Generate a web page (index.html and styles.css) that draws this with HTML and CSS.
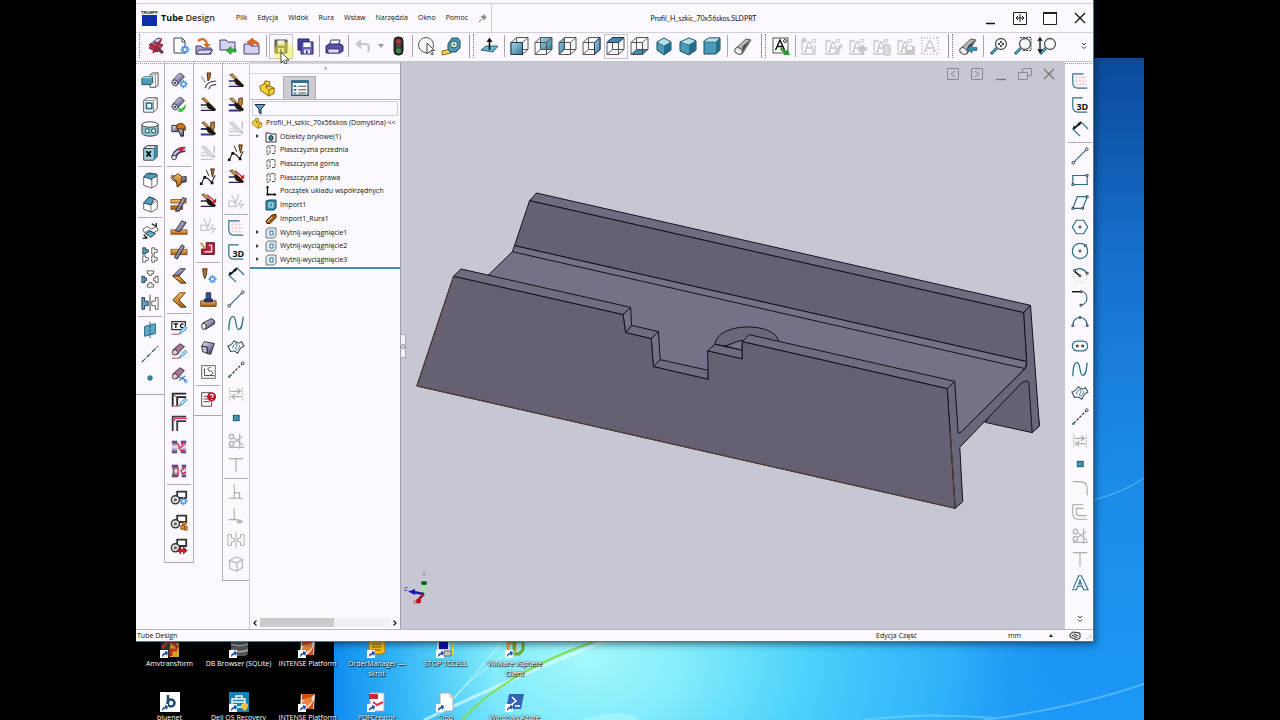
FILE: index.html
```html
<!DOCTYPE html>
<html lang="pl">
<head>
<meta charset="utf-8">
<title>Tube Design</title>
<link rel="stylesheet" href="styles.css">
</head>
<body>
<svg class="defs" aria-hidden="true">
  <defs>
    <linearGradient id="steel" x1="0" y1="0" x2="1" y2="1"><stop offset="0" stop-color="#a9d6e4"/><stop offset="1" stop-color="#2f7896"/></linearGradient>
    <linearGradient id="pipe" x1="0" y1="0" x2="1" y2="1"><stop offset="0" stop-color="#f4f4fa"/><stop offset=".5" stop-color="#9490b4"/><stop offset="1" stop-color="#2c2848"/></linearGradient>
    <linearGradient id="gold" x1="0" y1="0" x2="0" y2="1"><stop offset="0" stop-color="#f4b860"/><stop offset="1" stop-color="#a85c10"/></linearGradient>
    <linearGradient id="grayTube" x1="0" y1="0" x2="1" y2="1"><stop offset="0" stop-color="#fff"/><stop offset="1" stop-color="#555"/></linearGradient>
    <linearGradient id="weld" x1="0" y1="0" x2="0" y2="1"><stop offset="0" stop-color="#2f2b6a"/><stop offset=".5" stop-color="#ece6f4"/><stop offset="1" stop-color="#3c3070"/></linearGradient>
  </defs>
  <!-- shared parts -->
  <symbol id="wire" viewBox="0 0 20 20"><path d="M1 6.500h11.500v12H1zM6.500 1.500H18v12H6.500zM1 6.500l5.500-5M12.500 6.500l5.500-5M1 18.500l5.500-5M12.500 18.500l5.500-5" fill="none" stroke="#444" stroke-width=".9"/></symbol>
  <symbol id="tube" viewBox="0 0 20 20"><path d="M3 9L10 1.500c3 0 5 2 6 4L8 14z" fill="url(#pipe)" stroke="#2a2648" stroke-width=".8"/><ellipse cx="5.500" cy="12" rx="3.500" ry="3" transform="rotate(40 5.500 12)" fill="#d8d4e8" stroke="#2a2648"/><circle cx="5.500" cy="12" r="1.300" fill="#444"/></symbol>
  <symbol id="gear" viewBox="0 0 20 20"><path d="M15 9v9M10.500 13.500h9M12 10.500l6 6M18 10.500l-6 6" stroke="#4a94ea" stroke-width="1.800"/><circle cx="15" cy="13.500" r="1.500" fill="#fff"/></symbol>
  <symbol id="pen" viewBox="0 0 20 20"><path d="M3 3l3-1 6 6-2 2z" fill="#c89550" stroke="#5a3510" stroke-width=".8"/><path d="M9 7l4 2 6 6-2 2-7-3-2-4z" fill="#241608"/></symbol>
  <symbol id="letterA" viewBox="0 0 20 20"><path d="M2 5v13h13M2 5h5M15 18V9M5 15.500L8.500 6h1.500l3.500 9.500M6.500 12h5.500M4 15.500h3M11.500 15.500h3" fill="none" stroke="currentColor" stroke-width="1.300"/><circle cx="14" cy="5" r="1.800" fill="none" stroke="currentColor"/></symbol>
  <symbol id="lens" viewBox="0 0 20 20"><path d="M8 12l-6 6" stroke="#1d6684" stroke-width="3"/><path d="M8.500 11.500L3 17" stroke="#8cc5d8"/><circle cx="12" cy="8" r="5.500" fill="#f4f8fa" stroke="#555" stroke-width="1.300"/></symbol>

  <!-- standard bar -->
  <symbol id="app" viewBox="0 0 20 20"><path d="M3 9l9-7 4 1-9 10z" fill="#c8ccec" stroke="#40386a"/><path d="M3 12l6-6 8 3-6 7z" fill="#b4485c" stroke="#5a1020"/><path d="M4 8l12 9M7 17l8-13" stroke="#b01c34" stroke-width="2"/><path d="M12 10l6 6-2 2-6-6z" fill="#6a3a5c"/></symbol>
  <symbol id="new" viewBox="0 0 20 20"><path d="M4 2h8l3 3v12H4z" fill="#fff" stroke="#445"/><path d="M12 2v4h3" fill="none" stroke="#445"/><use href="#gear"/></symbol>
  <symbol id="open" viewBox="0 0 20 20"><path d="M2 10h5l2 2h8v6H2z" fill="#aaa6d4" stroke="#3c3870"/><path d="M5 14h14l-4 4H2z" fill="#dcdaf4" stroke="#3c3870"/><path d="M4 5c5-4 8-1 9 3" fill="none" stroke="#d86a20" stroke-width="2.400"/><path d="M9 8h8l-4 4z" fill="#d86a20"/></symbol>
  <symbol id="fetch" viewBox="0 0 20 20"><path d="M2 4h6l2 2h7v8H2z" fill="#d5d2ef" stroke="#45417c"/><path d="M8 14.500l5-4v2.500h5v3h-5v2.500z" fill="#32ae3c" stroke="#157a20" stroke-width=".6"/></symbol>
  <symbol id="send" viewBox="0 0 20 20"><path d="M2 8h5l2 2h8v8H2z" fill="#d5d2ef" stroke="#45417c"/><path d="M5 6l6-4v2.500c4 0 6 2 6 6-1-2-3-3-6-3V10z" fill="#e0691e" stroke="#9c3c08" stroke-width=".6"/></symbol>
  <symbol id="save" viewBox="0 0 20 20"><path d="M4 4h12v13H4z" fill="#77776a" stroke="#505044"/><path d="M6.500 4.500h7v5h-7z" fill="#f4f4ec"/><path d="M7 12h6v4.500H7z" fill="#e8e8d8"/><path d="M9 13h1.500v3H9z" fill="#55583c"/></symbol>
  <symbol id="saveall" viewBox="0 0 20 20"><path d="M3 3h11v11H3z" fill="#4b45a4" stroke="#25215e"/><path d="M6 6h12v12H6z" fill="#6560bc" stroke="#25215e"/><path d="M8.500 6.500h7V11h-7z" fill="#fff"/><path d="M9 13.500h6v4H9z" fill="#e4e4f8"/><path d="M11 14.500h1.500v3H11z" fill="#25215e"/></symbol>
  <symbol id="print" viewBox="0 0 20 20"><path d="M7 4h9l-2 6H5z" fill="#fff" stroke="#3b3878"/><path d="M2 10l3-2h12l2 2v5l-3 2H2z" fill="#5751a8" stroke="#2a2668"/><path d="M4 13h11v4H4z" fill="#dcdaf6" stroke="#2a2668" stroke-width=".7"/></symbol>
  <symbol id="undo" viewBox="0 0 20 20"><path d="M4 8h8c4 0 5 3 3 8" fill="none" stroke="#c8c8cc" stroke-width="2.200"/><path d="M2 8l6-5v10z" fill="#c8c8cc"/></symbol>
  <symbol id="light" viewBox="0 0 20 20"><rect x="6" y="1" width="9" height="18" rx="4" fill="#333" stroke="#111"/><circle cx="10.500" cy="5.500" r="2.500" fill="#b83838"/><circle cx="10.500" cy="10.200" r="1.600" fill="#554"/><circle cx="10.500" cy="14.700" r="2.500" fill="#389048"/></symbol>
  <symbol id="select" viewBox="0 0 20 20"><circle cx="9" cy="9" r="7.500" fill="none" stroke="#555"/><path d="M10 7v11l2.500-2.500L15 19l1.500-1-2.500-3.500h3.500z" fill="#fff" stroke="#444"/></symbol>
  <symbol id="tape" viewBox="0 0 20 20"><path d="M1 15l9-2v4l-9 2z" fill="#f0d050" stroke="#886a10"/><path d="M7 13V8l4-6h6l2 3v7l-4 4h-6z" fill="#4f9ab8" stroke="#194c64"/><circle cx="13" cy="8.500" r="3.500" fill="#f0ecc0" stroke="#194c64"/><circle cx="13" cy="8.500" r="1.200" fill="#3f8fae"/></symbol>
  <symbol id="normal" viewBox="0 0 20 20"><path d="M2 14l5-4h12l-5 6z" fill="#69b1ca" stroke="#256b86"/><path d="M10.500 14V4" stroke="#111" stroke-width="1.600"/><path d="M7.500 6l3-4.500 3 4.500z" fill="#111"/></symbol>
  <symbol id="c-front" viewBox="0 0 20 20"><use href="#wire"/><path d="M1 6.500h11.500v12H1z" fill="url(#steel)" stroke="#235"/></symbol>
  <symbol id="c-back" viewBox="0 0 20 20"><path d="M6.500 1.500H18v12H6.500z" fill="url(#steel)"/><use href="#wire"/></symbol>
  <symbol id="c-left" viewBox="0 0 20 20"><path d="M1 6.500l5.500-5v12l-5.500 5z" fill="url(#steel)"/><use href="#wire"/></symbol>
  <symbol id="c-right" viewBox="0 0 20 20"><use href="#wire"/><path d="M12.500 6.500l5.500-5v12l-5.500 5z" fill="url(#steel)" stroke="#235"/></symbol>
  <symbol id="c-top" viewBox="0 0 20 20"><use href="#wire"/><path d="M1 6.500l5.500-5H18l-5.500 5z" fill="#3f8aa8" stroke="#235"/></symbol>
  <symbol id="c-bottom" viewBox="0 0 20 20"><path d="M1 18.500l5.500-5H18l-5.500 5z" fill="#3f8aa8"/><use href="#wire"/></symbol>
  <symbol id="c-iso" viewBox="0 0 20 20"><path d="M10 2l7 4v8l-7 5-7-5V6z" fill="#4a9ab8" stroke="#164a60"/><path d="M10 2l7 4-7 4-7-4z" fill="#b5dfea" stroke="#164a60" stroke-width=".6"/><path d="M10 10l7-4v8l-7 5z" fill="#246e8c"/></symbol>
  <symbol id="c-tri" viewBox="0 0 20 20"><path d="M11 2l7 3v9l-7 5-9-4V6z" fill="#4a9ab8" stroke="#164a60"/><path d="M11 2l7 3-7 4-9-3z" fill="#b5dfea" stroke="#164a60" stroke-width=".6"/><path d="M11 9l7-4v9l-7 5z" fill="#246e8c"/></symbol>
  <symbol id="c-di" viewBox="0 0 20 20"><path d="M2 5l5-3h11v12l-4 4H2z" fill="#4a9ab8" stroke="#164a60"/><path d="M2 5l5-3h11l-4 4H2z" fill="#b5dfea" stroke="#164a60" stroke-width=".6"/><path d="M14 6l4-4v12l-4 4z" fill="#246e8c"/></symbol>
  <symbol id="roll" viewBox="0 0 20 20"><path d="M2 13L13 3l5 1-9 14z" fill="url(#grayTube)" stroke="#555"/><ellipse cx="5.500" cy="15" rx="4" ry="3" transform="rotate(35 5.500 15)" fill="#eee" stroke="#555"/><path d="M17 4l-8 12 1-6z" fill="#444"/></symbol>
  <symbol id="note" viewBox="0 0 20 20"><rect x="2" y="2" width="15" height="15" fill="#fff" stroke="#555"/><path d="M4.500 14L9 4l4.500 10M6 10.500h6" fill="none" stroke="#111" stroke-width="1.500"/><circle cx="14" cy="5" r="1.500" fill="none" stroke="#333"/><path d="M10 11l5 4 1-2 3 6h-7l1.500-1.500-4.500-4z" fill="#2f9a2a"/></symbol>
  <symbol id="a1" viewBox="0 0 20 20"><use href="#letterA"/><path d="M1 4h6M4 1v6M2 2l4 4M6 2L2 6" stroke="currentColor"/></symbol>
  <symbol id="a2" viewBox="0 0 20 20"><use href="#letterA"/><path d="M10 17l7-9 2 2-7 8z" fill="currentColor"/></symbol>
  <symbol id="a3" viewBox="0 0 20 20"><use href="#letterA"/><path d="M10 11h9v4h-9zM13 9h3v10h-3z" fill="currentColor"/></symbol>
  <symbol id="a4" viewBox="0 0 20 20"><use href="#letterA"/><rect x="12" y="9" width="6" height="10" rx="2" fill="#ddd" stroke="currentColor" stroke-width="1.500"/></symbol>
  <symbol id="a5" viewBox="0 0 20 20"><use href="#letterA"/><path d="M9 10h10v9H9z" fill="currentColor"/><path d="M11 10.500h5v3h-5z" fill="#fff"/></symbol>
  <symbol id="a6" viewBox="0 0 20 20"><path d="M5 15L9 5h1.500L15 15M6.500 12h6.500M4 15h3M12.500 15H16" fill="none" stroke="currentColor" stroke-width="1.300"/><path d="M2 1v18M18 1v18M1 2h18M1 18h18" stroke="currentColor" stroke-width="2" stroke-dasharray="1 2"/></symbol>
  <symbol id="rollb" viewBox="0 0 20 20"><use href="#roll"/><path d="M9 13l5-4v2.500h5v3h-5V17z" fill="#3b8db0" stroke="#17506a" stroke-width=".6"/></symbol>
  <symbol id="z1" viewBox="0 0 20 20"><use href="#lens"/><path d="M9 8h6M12 5v6" stroke="#111" stroke-width="1.400" stroke-dasharray="2 2"/></symbol>
  <symbol id="z2" viewBox="0 0 20 20"><path d="M7 1.500h11v13H9" fill="none" stroke="#333" stroke-dasharray="2 1"/><use href="#lens"/></symbol>
  <symbol id="z3" viewBox="0 0 20 20"><use href="#lens" x="1"/><path d="M3 3v12M1 5l2-3 2 3M1 13l2 3 2-3" fill="none" stroke="#111" stroke-width="1.300"/></symbol>

  <!-- features -->
  <symbol id="f1" viewBox="0 0 20 20"><path d="M10 3l3-2h6v14l-3 2h-6z" fill="#fff" stroke="#444"/><path d="M16 3v14M10 3h6l3-2" fill="none" stroke="#888"/><path d="M1 7l3-2h9v7l-2 2H1z" fill="#4c9dba" stroke="#174a5e"/><path d="M1 7l3-2h9l-2 2z" fill="#a5d5e4"/></symbol>
  <symbol id="f2" viewBox="0 0 20 20"><path d="M3 5l4-3h11v12l-4 4H3z" fill="#fff" stroke="#444"/><path d="M14 5v13M14 5l4-3M3 5h11" fill="none" stroke="#888"/><path d="M6 8h6v6H6z" fill="#fff" stroke="#2b7c98" stroke-width="2"/></symbol>
  <symbol id="f3" viewBox="0 0 20 20"><path d="M1 5v10c3 4 15 4 18 0V5z" fill="#8cc4d6" stroke="#333"/><ellipse cx="10" cy="5" rx="9" ry="3" fill="#fff" stroke="#333"/><path d="M5 10h4v4H5zM12 10h4v4h-4z" fill="#fff" stroke="#174a5e"/></symbol>
  <symbol id="f4" viewBox="0 0 20 20"><path d="M3 5l4-3h11v12l-4 4H3z" fill="#a9d5e3" stroke="#333"/><path d="M3 5l4-3h11l-4 3z" fill="#fff" stroke="#333"/><path d="M14 5l4-3v12l-4 4z" fill="#3c8aa6"/><path d="M6 8l5 6M11 8l-5 6" stroke="#111" stroke-width="2"/></symbol>
  <symbol id="f5" viewBox="0 0 20 20"><path d="M3 7l6-5 9 2v11l-6 4-9-3z" fill="#fff" stroke="#555"/><path d="M3 7l3-4h10c2 1 2 3 0 4-3 0-4 1-4 3-3-2-6-3-9-3z" fill="#4d9fbb" stroke="#235"/><path d="M12 9v10" stroke="#666"/></symbol>
  <symbol id="f6" viewBox="0 0 20 20"><path d="M3 9l6-7 9 4v9l-6 4-9-3z" fill="#fff" stroke="#555"/><path d="M3 9l6-7 6 2-4 7z" fill="#4d9fbb" stroke="#235"/><path d="M11 11l7-5M11 11v8" stroke="#666"/></symbol>
  <symbol id="f7" viewBox="0 0 20 20"><path d="M2 8l5-3 5 3 5-3 2 4-5 3-5-3-5 3z" fill="#fff" stroke="#555"/><path d="M5 13l5-3 6 3-5 4z" fill="#63b0c9" stroke="#235"/><path d="M12 2l5 3M17 5V1M3 14l4 4M7 18H2" stroke="#111" stroke-width="1.400"/></symbol>
  <symbol id="f8" viewBox="0 0 20 20"><path d="M2 2h3v2h3v3H5v2H2z" fill="#57a7c2" stroke="#235"/><path d="M12 2h3v2h3v3h-3v2h-3zM2 11h3v2h3v3H5v2H2zM12 11h3v2h3v3h-3v2h-3z" fill="#fff" stroke="#555"/></symbol>
  <symbol id="f9" viewBox="0 0 20 20"><path d="M1 7h3v2h2v3H4v2H1z" fill="#57a7c2" stroke="#235"/><path d="M7 1h7v3h-2v2H9V4H7zM19 7h-3v2h-2v3h2v2h3zM7 19h7v-3h-2v-2H9v2H7z" fill="#fff" stroke="#555"/></symbol>
  <symbol id="f10" viewBox="0 0 20 20"><path d="M1 4h3v4h4v5H4v4H1z" fill="#57a7c2" stroke="#235"/><path d="M19 4h-3v4h-4v5h4v4h3z" fill="#fff" stroke="#555"/><path d="M10 1v18" stroke="#333"/></symbol>
  <symbol id="f11" viewBox="0 0 20 20"><path d="M4 6l12-3v11L4 17z" fill="#5caac5" stroke="#1d607b"/><path d="M10 1v18" stroke="#174a5e" stroke-dasharray="3 1"/></symbol>
  <symbol id="axis" viewBox="0 0 20 20"><path d="M1 19L19 1" stroke="#23505e" stroke-width="1.300" stroke-dasharray="5 1 1 1"/></symbol>
  <symbol id="dot" viewBox="0 0 20 20"><circle cx="10" cy="10" r="2.500" fill="#3e93ae" stroke="#1d5a70"/></symbol>

  <!-- tube bar -->
  <symbol id="t1" viewBox="0 0 20 20"><use href="#tube"/><use href="#gear"/></symbol>
  <symbol id="t2" viewBox="0 0 20 20"><use href="#tube"/><path d="M8 17l3-4 1.500 1.500L18 9l-1 5-4 4z" fill="#3fc03c"/></symbol>
  <symbol id="t3" viewBox="0 0 20 20"><path d="M2 6h10v7H2z" fill="url(#pipe)" stroke="#222"/><path d="M8 5c5-3 10 0 9 6l-5 1-5-3z" fill="#d07418" stroke="#4a2404"/><path d="M9 10h6v8h-3z" fill="url(#pipe)" stroke="#222"/></symbol>
  <symbol id="t4" viewBox="0 0 20 20"><path d="M4 15c2-6 6-9 13-9" fill="none" stroke="#3a3660" stroke-width="6"/><path d="M4 14c2-5 6-8 13-8" fill="none" stroke="#c8c4dc" stroke-width="2.500"/><path d="M10 7c2-1 4-2 5-2" stroke="#d82030" stroke-width="4" fill="none"/><circle cx="4.500" cy="15" r="2.500" fill="#eee" stroke="#222"/></symbol>
  <symbol id="t5" viewBox="0 0 20 20"><path d="M2 5l9 2 7-1v6l-9 2-7-5z" fill="url(#pipe)" stroke="#333"/><path d="M3 7l6-4 4 3-1 9-4 3-1-7z" fill="url(#gold)" stroke="#5c2f06"/></symbol>
  <symbol id="t6" viewBox="0 0 20 20"><path d="M1 5h17v4H1zM1 12h13v4H1z" fill="url(#gold)" stroke="#5c2f06" stroke-width=".7"/><path d="M6 18L14 3l4 1-8 14z" fill="url(#pipe)" stroke="#222"/></symbol>
  <symbol id="t7" viewBox="0 0 20 20"><path d="M1 12h18v5H1z" fill="url(#gold)" stroke="#5c2f06" stroke-width=".7"/><path d="M6 13L13 2l5 2-7 10z" fill="url(#pipe)" stroke="#222"/></symbol>
  <symbol id="t8" viewBox="0 0 20 20"><path d="M1 7h18v6H1z" fill="url(#gold)" stroke="#5c2f06" stroke-width=".7"/><path d="M5 16L13 2l3 2-8 14z" fill="url(#pipe)" stroke="#222"/></symbol>
  <symbol id="t9" viewBox="0 0 20 20"><path d="M3 10l8-8h6l-7 8z" fill="url(#pipe)" stroke="#222"/><path d="M3 10h7l8 8h-6z" fill="url(#gold)" stroke="#5c2f06"/></symbol>
  <symbol id="t10" viewBox="0 0 20 20"><path d="M3 10l8-8h6l-7 8 8 8h-6z" fill="url(#gold)" stroke="#5c2f06"/></symbol>
  <symbol id="edit" viewBox="0 0 20 20"><path d="M2 18h8" stroke="#d86a80" stroke-width="1.400"/><path d="M10 18l2-4 5-5 2 2-5 5z" fill="#b8e0f4" stroke="#3888c0"/></symbol>
  <symbol id="t11" viewBox="0 0 20 20"><path d="M2 4h15v9H2z" fill="#fff" stroke="#333" stroke-width="1.400"/><path d="M4 6.500h5M6.500 6.500V11M15 7c-4-2-5 5 0 3.500" fill="none" stroke="#111" stroke-width="1.500"/><use href="#edit"/></symbol>
  <symbol id="t12" viewBox="0 0 20 20"><path d="M3 9l8-7 5 3-8 9z" fill="#a07890" stroke="#40283a"/><circle cx="5.500" cy="11.500" r="3" fill="#e8c8d0" stroke="#40283a"/><use href="#edit"/></symbol>
  <symbol id="t13" viewBox="0 0 20 20"><path d="M3 9l8-7 5 3-8 9z" fill="#a07890" stroke="#40283a"/><circle cx="5.500" cy="11.500" r="3" fill="#e8c8d0" stroke="#40283a"/><path d="M10 12l8 4M10 16l7-5" stroke="#2878d8" stroke-width="1.300"/><circle cx="17.500" cy="17" r="1.500" fill="none" stroke="#2878d8"/></symbol>
  <symbol id="t14" viewBox="0 0 20 20"><path d="M18 4H3v15M18 8H8v10" fill="none" stroke="#222" stroke-width="2"/><path d="M3 4l5 5" stroke="#d82030"/><use href="#edit"/></symbol>
  <symbol id="t15" viewBox="0 0 20 20"><path d="M18 3H3v16M18 8H8v11" fill="none" stroke="#3b3540" stroke-width="2"/><path d="M5 8V5h14" fill="none" stroke="#d83848" stroke-width="1.200"/></symbol>
  <symbol id="t16" viewBox="0 0 20 20"><path d="M2 3h6v14H2zM12 3h6v14h-6zM8 8h4v4H8z" fill="url(#weld)"/><path d="M4 6h4c3 0 1 8 4 8h4M14 4v5l-3 2" fill="none" stroke="#d82848" stroke-width="1.300"/></symbol>
  <symbol id="t17" viewBox="0 0 20 20"><path d="M2 3h7v14H2zM13 3h5v14h-5z" fill="url(#weld)"/><path d="M4 6h5v9H4zM17 5l-5 5 2 3 4-2" fill="none" stroke="#d82848" stroke-width="1.400"/></symbol>
  <symbol id="machine" viewBox="0 0 20 20"><path d="M8 3h10v7H8z" fill="#fff" stroke="#333" stroke-width="2"/><circle cx="6" cy="12" r="4.500" fill="#e4e4ea" stroke="#333" stroke-width="1.600"/><circle cx="6" cy="12" r="1.800" fill="#666"/></symbol>
  <symbol id="t18" viewBox="0 0 20 20"><use href="#machine"/><use href="#gear"/></symbol>
  <symbol id="t19" viewBox="0 0 20 20"><use href="#machine"/><path d="M14 10h4v3h-4zM12 14h4v4h-4zM16 15h3v4h-3z" fill="#f09a28" stroke="#884808"/></symbol>
  <symbol id="t20" viewBox="0 0 20 20"><use href="#machine"/><path d="M8 15l4-4v2.500h3V11l4 4-4 4v-2.500h-3V19z" fill="#c01828" stroke="#600810" stroke-width=".6"/></symbol>

  <!-- sketch-cut bar -->
  <symbol id="s1" viewBox="0 0 20 20"><path d="M9 1h4l-1 6-2 3z" fill="#b87830" stroke="#3a2008"/><path d="M3 6l4 5M7 18c1-6 5-8 12-8M11 19c1-4 3-5 8-5" fill="none" stroke="#444" stroke-width="1.300"/><path d="M3 4l3 6" stroke="#ccc" stroke-width="2"/></symbol>
  <symbol id="s2" viewBox="0 0 20 20"><path d="M2 10h8M2 16h16" stroke="#23245c" stroke-width="1.600"/><path d="M2 13h9" stroke="#b8b8d0"/><use href="#pen"/></symbol>
  <symbol id="s3" viewBox="0 0 20 20"><path d="M2 10h8M2 16h14" stroke="#2b3580" stroke-width="2.200"/><path d="M13 11V3l4-1v6l-2 5z" fill="#c58b3a" stroke="#4a2c0c"/><use href="#pen"/></symbol>
  <symbol id="s4" viewBox="0 0 20 20"><path d="M2 10h6M2 13h8M2 17h14" stroke="#c8c8cc" stroke-width="1.300"/><path d="M3 3l3-1 6 6 6 7-7-2-3-4z" fill="#dcdce0" stroke="#bcbcc0"/><path d="M17 2v8M17 12v2" stroke="#bcbcc0" stroke-width="1.500"/></symbol>
  <symbol id="s5" viewBox="0 0 20 20"><path d="M3 17l3-7 4 2 4 4 4-8" fill="none" stroke="#222" stroke-width="1.200"/><path d="M1 16h3v3H1zM5 9h3v3H5zM13 15h3v3h-3z" fill="#111"/><path d="M8 2l3 7M13 1h4l-2 9z" fill="#c07a30" stroke="#3a2008"/></symbol>
  <symbol id="s6" viewBox="0 0 20 20"><path d="M2 10h8M2 16h14" stroke="#23245c" stroke-width="1.600"/><use href="#pen"/><path d="M9 3l8 7" stroke="#d01828" stroke-width="1.300"/><path d="M19 7v5h-5z" fill="#d01828"/></symbol>
  <symbol id="s7" viewBox="0 0 20 20"><path d="M2 10h5l4 6H2zM5 3l5 9M13 2l-3 10M16 9l-3 5h5l-4 5" fill="none" stroke="#c4c4c8" stroke-width="1.300"/></symbol>
  <symbol id="s8" viewBox="0 0 20 20"><path d="M8 3h9v13H3v-6h5z" fill="#c32040" stroke="#400818"/><path d="M11 6h3v7H6" fill="none" stroke="#f8d8e0" stroke-width="1.500"/><path d="M2 3l5 7" stroke="#c58b3a" stroke-width="2"/></symbol>
  <symbol id="s9" viewBox="0 0 20 20"><path d="M4 2h5l-1 7-1.500 4L5 9z" fill="#b87830" stroke="#3a2008"/><use href="#gear"/></symbol>
  <symbol id="s10" viewBox="0 0 20 20"><path d="M2 11h17v6H2z" fill="url(#gold)" stroke="#5c2f06"/><path d="M8 2h5v9H8zM6 9h9v3H6z" fill="#41578c" stroke="#161e48"/></symbol>
  <symbol id="s11" viewBox="0 0 20 20"><path d="M4 9l10-5c3 1 4 3 3 6L7 16z" fill="url(#pipe)" stroke="#222"/><ellipse cx="5.500" cy="12.500" rx="2.500" ry="3.500" fill="#eee" stroke="#222"/></symbol>
  <symbol id="s12" viewBox="0 0 20 20"><path d="M6 3l11 2-4 12-4-1V9L3 8z" fill="url(#pipe)" stroke="#222"/><path d="M3 8l6 1v7l-5-2z" fill="#c4c0dc" stroke="#222"/></symbol>
  <symbol id="s13" viewBox="0 0 20 20"><rect x="3" y="3" width="15" height="14" fill="#fff" stroke="#555"/><path d="M6 6v8h11M13 5c-5 0-3 5 0 4 3 0 3 4 0 4" fill="none" stroke="#333"/></symbol>
  <symbol id="s14" viewBox="0 0 20 20"><path d="M3 3h11v15H3z" fill="#fff" stroke="#4a3440"/><path d="M5 7h5M5 10h5M5 13h7" stroke="#4a3440"/><circle cx="14" cy="7.500" r="5" fill="#b81828"/><path d="M12.500 6c1-2 4-1 3 1l-1.500 1.500M14 10v1" fill="none" stroke="#fff" stroke-width="1.300"/></symbol>

  <!-- sketch bar -->
  <symbol id="k1" viewBox="0 0 20 20"><path d="M6 3v12M10 3v14M14 3v14M4 6h14M4 10h14M5 14h13" stroke="#f0c8cc" stroke-width=".8"/><path d="M14 2H2v10c0 4 2 6 6 6h10" fill="none" stroke="#286f8a" stroke-width="1.300"/></symbol>
  <symbol id="k2" viewBox="0 0 20 20"><path d="M13 2H2v10c0 4 2 6 6 6h10" fill="none" stroke="#286f8a" stroke-width="1.300"/><text x="6" y="15" class="t3d">3D</text></symbol>
  <symbol id="k3" viewBox="0 0 20 20"><path d="M10 18l-8-8 9-8 8 8" fill="none" stroke="#286f8a" stroke-width="1.300"/><path d="M3 10l8-7" stroke="#111" stroke-width="1.800"/><path d="M2 10l1-4 3 3zM11 2.500l-1 4-3-3z" fill="#111"/></symbol>
  <symbol id="line" viewBox="0 0 20 20"><path d="M3 17L17 3" stroke="#286f8a" stroke-width="1.300"/><circle cx="2.500" cy="17.500" r="1.500" fill="#fff" stroke="#333"/><circle cx="17.500" cy="2.500" r="1.500" fill="#fff" stroke="#333"/></symbol>
  <symbol id="spline" viewBox="0 0 20 20"><path d="M2 18C2 8 4 2 7 3c4 1 2 14 6 14 4 0 4-7 5-14" fill="none" stroke="#286f8a" stroke-width="1.400"/></symbol>
  <symbol id="surf" viewBox="0 0 20 20"><path d="M1 9c3 0 5-3 7-6l3 2c2 1 4 0 5-1l3 5c-3 1-5 3-7 8l-3-2c-2-1-3-1-5 0z" fill="none" stroke="#3b5158" stroke-width="1.200"/><path d="M6 11c1-4 4-6 5-4s-3 5-1 6 4-3 4-5" fill="none" stroke="#286f8a"/></symbol>
  <symbol id="cline" viewBox="0 0 20 20"><path d="M3 17L17 3" stroke="#222" stroke-width="1.300" stroke-dasharray="3 1.500"/><circle cx="2.500" cy="17.500" r="1.500" fill="#486"/><circle cx="17.500" cy="2.500" r="1.500" fill="#fff" stroke="#333"/></symbol>
  <symbol id="g-conv" viewBox="0 0 20 20"><path d="M3 3v14M17 3v14" stroke="#aaa" stroke-dasharray="2 1"/><path d="M4 7h10M11 4l4 3-4 3M16 13H7M9 10l-4 3 4 3" fill="none" stroke="#aaa" stroke-width="1.300"/></symbol>
  <symbol id="pt" viewBox="0 0 20 20"><rect x="7" y="7" width="6.500" height="6" fill="#3e93ae" stroke="#174a5e"/></symbol>
  <symbol id="g-trim" viewBox="0 0 20 20"><circle cx="5" cy="5" r="2.500" fill="none" stroke="#b4b4b8" stroke-width="1.500"/><circle cx="5" cy="13" r="2.500" fill="none" stroke="#b4b4b8" stroke-width="1.500"/><path d="M7 6l11 9M7 12l10-7M14 2v17M2 17h17" stroke="#b4b4b8" stroke-width="1.300"/></symbol>
  <symbol id="g-t" viewBox="0 0 20 20"><path d="M2 3h16" stroke="#aaa" stroke-width="1.400"/><path d="M10 3v15" stroke="#aaa" stroke-width="1.200"/></symbol>
  <symbol id="g-perp" viewBox="0 0 20 20"><path d="M2 17h16M8 2v15M8 11h6v6" fill="none" stroke="#aaa" stroke-width="1.200"/></symbol>
  <symbol id="g-vis" viewBox="0 0 20 20"><path d="M2 14h10M8 2v12" fill="none" stroke="#aaa" stroke-width="1.200"/><path d="M10 16c2-3 6-3 8 0-2 3-6 3-8 0z" fill="#bbb"/></symbol>
  <symbol id="g-mir" viewBox="0 0 20 20"><path d="M1 4h4v4h3v4H5v4H1zM19 4h-4v4h-3v4h3v4h4zM10 1v18" fill="none" stroke="#aaa"/></symbol>
  <symbol id="g-cube" viewBox="0 0 20 20"><path d="M3 6l7-4 7 3v9l-6 4-8-3zM3 6l8 3 6-4M11 9v9" fill="none" stroke="#b4b4b8" stroke-width="1.300"/></symbol>
  <symbol id="rect" viewBox="0 0 20 20"><path d="M2 5h16v10H2z" fill="none" stroke="#286f8a" stroke-width="1.300"/><path d="M1 14h2v2H1zM17 4h2v2h-2z" fill="#fff" stroke="#333"/></symbol>
  <symbol id="para" viewBox="0 0 20 20"><path d="M7 3h11l-5 13H2z" fill="none" stroke="#286f8a" stroke-width="1.300"/><path d="M1 15h2v2H1zM12 15h2v2h-2zM17 2h2v2h-2z" fill="#fff" stroke="#333"/></symbol>
  <symbol id="hex" viewBox="0 0 20 20"><path d="M6 2.500h8l4.500 7.500-4.500 7.500H6L1.500 10z" fill="none" stroke="#286f8a" stroke-width="1.300"/><path d="M9 9h2v2H9z" fill="none" stroke="#333"/></symbol>
  <symbol id="circ" viewBox="0 0 20 20"><circle cx="10" cy="10" r="8.500" fill="none" stroke="#286f8a" stroke-width="1.300"/><path d="M9 9h2v2H9zM15 3h2v2h-2z" fill="#fff" stroke="#333"/></symbol>
  <symbol id="arc" viewBox="0 0 20 20"><circle cx="10" cy="11" r="7.500" fill="none" stroke="#d8a8a8" stroke-dasharray="1.500 2"/><path d="M4 5c5-4 11-2 14 4" fill="none" stroke="#286f8a" stroke-width="1.300"/><path d="M4 6l6 5" stroke="#111" stroke-width="1.600"/><path d="M3 4h2v2H3zM9 10h2v2H9zM17 7h2v2h-2z" fill="#fff" stroke="#333"/></symbol>
  <symbol id="tarc" viewBox="0 0 20 20"><path d="M1 3h10" stroke="#111" stroke-width="1.600"/><path d="M11 3c9 0 9 14 0 15" fill="none" stroke="#286f8a" stroke-width="1.300"/><path d="M10 2h2v2h-2zM10 17h2v2h-2z" fill="#fff" stroke="#333"/></symbol>
  <symbol id="arc3" viewBox="0 0 20 20"><path d="M2 14C2 2 18 2 18 14" fill="none" stroke="#286f8a" stroke-width="1.300"/><path d="M1 13h2v2H1zM9 4h2v2H9zM17 13h2v2h-2z" fill="#fff" stroke="#333"/></symbol>
  <symbol id="slot" viewBox="0 0 20 20"><rect x="1.500" y="4.500" width="17" height="11" rx="5.500" fill="none" stroke="#286f8a" stroke-width="1.300"/><path d="M6 9h2v2H6zM12 9h2v2h-2z" fill="#999" stroke="#333"/></symbol>
  <symbol id="g-fil" viewBox="0 0 20 20"><path d="M2 3h8c5 0 8 3 8 8v7" fill="none" stroke="#aaa" stroke-width="1.300"/></symbol>
  <symbol id="g-off" viewBox="0 0 20 20"><path d="M14 2H2v10c0 4 2 6 6 6h10M14 6H6v5c0 2 1 3 3 3h8" fill="none" stroke="#aaa" stroke-width="1.200"/></symbol>
  <symbol id="txt" viewBox="0 0 20 20"><path d="M1 17.500h5l1.500-4h5l1.500 4h5L11.500 2h-3L2.500 16M8.500 11h3L10 6.500z" fill="none" stroke="#286f8a" stroke-width="1.200"/></symbol>
  <symbol id="chev" viewBox="0 0 10 10"><path d="M3 2l2 2 2-2M3 5.500l2 2 2-2" fill="none" stroke="#333"/></symbol>

  <!-- tree -->
  <symbol id="part" viewBox="0 0 20 20"><path d="M2 8l5-3 1-3 5 1v5l5 2v6l-6 3-9-6z" fill="#f2cf3c" stroke="#7a5c08"/><path d="M8 9l5-2M12 19v-7l6-2M7 5l3 2v4" fill="none" stroke="#7a5c08"/></symbol>
  <symbol id="props" viewBox="0 0 20 20"><path d="M1 2h18v16H1z" fill="#fff" stroke="#2a5a70" stroke-width="1.500"/><path d="M1 3h18" stroke="#2a7090" stroke-width="3"/><path d="M3 7h3v2H3zM3 11h3v2H3zM3 15h3v1.500H3z" fill="#2a7090"/><path d="M8 8h9M8 12h9M8 15.500h9" stroke="#333"/></symbol>
  <symbol id="funnel" viewBox="0 0 12 12"><path d="M1 1.500h10L7 6v5l-2-1.500V6z" fill="#5aa6c0" stroke="#224"/></symbol>
  <symbol id="r-body" viewBox="0 0 12 12"><path d="M1 2h4l1 1h5v8H1z" fill="#fff" stroke="#333"/><path d="M4 5.500l2-1 2 1v3l-2 1-2-1z" fill="#3a88a8" stroke="#134"/></symbol>
  <symbol id="r-plane" viewBox="0 0 12 12"><path d="M2 2.500l3-1v8l-3 1zM6 1.500h4v8H7" fill="none" stroke="#555" stroke-dasharray="3 1"/></symbol>
  <symbol id="r-orig" viewBox="0 0 12 12"><path d="M2.500 1v8.500H11" fill="none" stroke="#111" stroke-width="1.300"/><path d="M1 3l1.500-2.500L4 3zM9 8l2.500 1.500L9 11zM1.500 8.500h2v2h-2z" fill="#111"/></symbol>
  <symbol id="r-imp" viewBox="0 0 12 12"><path d="M1 2l3-1h7v8l-2 2H1z" fill="#3b8fae" stroke="#134a60"/><path d="M4 4h4v4H4z" fill="none" stroke="#cfeaf2"/></symbol>
  <symbol id="r-tube" viewBox="0 0 12 12"><path d="M1 8l6-6 4-.5v3L5 10.500H2z" fill="#a8611c" stroke="#3c1c04"/><path d="M2 9l5-5" stroke="#f4d0a0"/></symbol>
  <symbol id="r-cut" viewBox="0 0 12 12"><path d="M1 3l2-2h8v8l-2 2H1z" fill="#dcebf2" stroke="#777"/><path d="M5 4h3v4H5z" fill="#fff" stroke="#2f7896"/></symbol>
  <symbol id="lnk" viewBox="0 0 20 20"><path d="M0 12h8v8H0z" fill="#fff"/><path d="M2 19c0-3 1-4 3-4v-2l3 1-1 4-1-1.500c-2 0-2 1-4 2.500z" fill="#1c50b0"/></symbol>
</svg>

<div class="desktop">
  <svg class="wallpaper" viewBox="0 0 810 662" preserveAspectRatio="none" aria-hidden="true">
    <defs>
      <linearGradient id="sky" x1="0" y1="0" x2="0" y2="1"><stop offset="0" stop-color="#0b4a9a"/><stop offset=".3" stop-color="#1770cc"/><stop offset=".6" stop-color="#1b8ae6"/><stop offset="1" stop-color="#1c98f6"/></linearGradient>
      <radialGradient id="glow" gradientUnits="userSpaceOnUse" cx="0" cy="0" r="1" gradientTransform="translate(255 600) scale(480 330)"><stop offset="0" stop-color="#a4f8fa"/><stop offset=".2" stop-color="#84ecfb"/><stop offset=".45" stop-color="#4dd2fa"/><stop offset=".75" stop-color="#35b8fa" stop-opacity=".8"/><stop offset="1" stop-color="#1c98f4" stop-opacity="0"/></radialGradient>
      <linearGradient id="edge" x1="0" y1="0" x2="1" y2="0"><stop offset="0" stop-color="#108cf0"/><stop offset=".2" stop-color="#30b8f8" stop-opacity="0"/></linearGradient>
    </defs>
    <rect width="810" height="662" fill="url(#sky)"/>
    <rect width="810" height="662" fill="url(#glow)"/>
    <rect width="810" height="662" fill="url(#edge)"/>
    <path d="M90 662Q200 610 290 576" fill="none" stroke="#e8ffff" stroke-width="3" opacity=".6"/>
    <path d="M112 650L168 584M112 650Q130 622 190 584" fill="none" stroke="#e8ffff" opacity=".7"/>
    <path d="M128 662Q170 614 270 580" fill="none" stroke="#86dc50" stroke-width="2"/>
    <path d="M760 442Q790 434 810 420" fill="none" stroke="#6cc4f8" opacity=".8"/>
    <path d="M248 662Q290 648 306 662z" fill="#c8ffff" opacity=".4"/>
    <path d="M530 662Q590 654 660 660M650 662Q740 650 810 626" fill="none" stroke="#9ce4ff" stroke-width="2" opacity=".4"/>
  </svg>

  <ul class="shortcuts">
    <li><a href="#"><svg viewBox="0 0 20 20"><path d="M1 3h18v16H1z" fill="#333"/><path d="M10 5h9v14h-9z" fill="#d8a428"/><path d="M2 10L10 2l8 8M11 18v-6h6" fill="none" stroke="#c03020" stroke-width="3"/><use href="#lnk"/></svg><span>Amvtransform</span></a></li>
    <li><a href="#"><svg viewBox="0 0 20 20"><rect x="2" y="1" width="17" height="17" rx="4" fill="#555"/><path d="M2 6c5 2 12 2 17 0M2 12c5 2 12 2 17 0" fill="none" stroke="#aaa" stroke-width="1.500"/><use href="#lnk"/></svg><span>DB Browser (SQLite)</span></a></li>
    <li><a href="#"><svg viewBox="0 0 20 20"><path d="M3 2h14l-1 15H2z" fill="#f4e8dc"/><path d="M4 2h13l-4 4-9 2zM16 7l-1 10H8c4-2 6-5 8-10z" fill="#cf4e14"/><ellipse cx="9" cy="10" rx="6" ry="3.500" fill="#e8843c" transform="rotate(-35 9 10)"/><use href="#lnk"/></svg><span>INTENSE Platform</span></a></li>
    <li><a href="#"><svg viewBox="0 0 20 20"><path d="M2 2h16v12l-3 2H2z" fill="#f7bd18" stroke="#b87e08"/><path d="M5 6h9M5 9h9M5 12h9" stroke="#8c5c04"/><use href="#lnk"/></svg><span>OrderManager — skrót</span></a></li>
    <li><a href="#"><svg viewBox="0 0 20 20"><path d="M1 2h13v11H1z" fill="#ddd"/><path d="M3 4h9v7H3z" fill="#0c0cb0"/><path d="M8 13h7v5H8z" fill="#c8c8c8" stroke="#666"/><path d="M17 3v14" stroke="#e8d820" stroke-width="2"/><use href="#lnk"/></svg><span>STOP TCCELL</span></a></li>
    <li><a href="#"><svg viewBox="0 0 20 20"><path d="M3 12V5h7v9" fill="none" stroke="#e89a28" stroke-width="3"/><path d="M9 12V3h9v9l-4 4H9" fill="none" stroke="#6aa82c" stroke-width="3"/><use href="#lnk"/></svg><span>VMware vSphere<br>Client</span></a></li>
    <li><a href="#"><svg viewBox="0 0 20 20"><path d="M0 0h20v20H0z" fill="#fff"/><path d="M8 3v10" stroke="#1f4a78" stroke-width="2.500"/><circle cx="11" cy="11" r="3.500" fill="none" stroke="#1f4a78" stroke-width="2.500"/><use href="#lnk"/></svg><span>bluenet</span></a></li>
    <li><a href="#"><svg viewBox="0 0 20 20"><path d="M0 0h20v20H0z" fill="#1683ae"/><path d="M3 7h13v8H3zM7 7V4h6v3M3 10h13" fill="none" stroke="#fff" stroke-width="1.300"/><path d="M12 12l4-1 3 1c0 4-1 5-3 7-3-2-4-3-4-7z" fill="#f0c040"/><use href="#lnk"/></svg><span>Dell OS Recovery</span></a></li>
    <li><a href="#"><svg viewBox="0 0 20 20"><path d="M3 2h14l-1 15H2z" fill="#f4e8dc"/><path d="M4 2h13l-4 4-9 2zM16 7l-1 10H8c4-2 6-5 8-10z" fill="#cf4e14"/><ellipse cx="9" cy="10" rx="6" ry="3.500" fill="#e8843c" transform="rotate(-35 9 10)"/><use href="#lnk"/></svg><span>INTENSE Platform</span></a></li>
    <li><a href="#"><svg viewBox="0 0 20 20"><path d="M3 1h14v18H3z" fill="#fff" stroke="#aaa"/><path d="M2 2h9v5H2z" fill="#c8283c"/><path d="M6 10l4 3 6-3" fill="none" stroke="#e03050" stroke-width="2"/><use href="#lnk"/></svg><span>PDFCreator</span></a></li>
    <li><a href="#"><svg viewBox="0 0 20 20"><path d="M4 1h10l3 3v15H4z" fill="#fff" stroke="#aaa"/><path d="M14 1v4h3" fill="none" stroke="#aaa"/><use href="#lnk"/></svg><span>Stop</span></a></li>
    <li><a href="#"><svg viewBox="0 0 20 20"><path d="M4 2h15l-3 15H1z" fill="#3464b8"/><path d="M7 5l4 4-5 4M10 14h5" fill="none" stroke="#fff" stroke-width="1.600"/><use href="#lnk"/></svg><span>Windows Azure</span></a></li>
  </ul>

  <div class="window">
    <div class="strip"></div>
    <header class="titlebar">
      <div class="brand"><svg viewBox="0 0 16 16" aria-label="TRUMPF"><text x="0" y="4" class="logo-text">TRUMPF</text><path d="M1 5h15v11H1z" fill="#0c2fa8"/></svg><span><b>Tube</b> Design</span></div>
      <nav class="menu">
        <button>Plik</button><button>Edycja</button><button>Widok</button><button>Rura</button><button>Wstaw</button><button>Narzędzia</button><button>Okno</button><button>Pomoc</button>
        <button class="pin" aria-label="Przypnij"><svg viewBox="0 0 10 10"><path d="M5.500 1L9 4.500 7.500 5 6.500 7.500 2.500 3.500 5 2.500z" fill="#888"/><path d="M4 6L1 9" stroke="#777"/></svg></button>
      </nav>
      <h1>Profil_H_szkic_70x56skos.SLDPRT</h1>
      <div class="winctl">
        <button aria-label="Minimalizuj"><svg viewBox="0 0 14 14"><path d="M3 12.500h9" stroke="#111" stroke-width="1.500"/></svg></button>
        <button aria-label="Rozciągnij"><svg viewBox="0 0 14 14"><path d="M.5 1.500h13v12H.5zM7 3v8M3 7h8M5 5L3 7l2 2M9 5l2 2-2 2" fill="none" stroke="#222"/></svg></button>
        <button aria-label="Maksymalizuj"><svg viewBox="0 0 14 14"><path d="M.5 1.500h13v12H.5z" fill="none" stroke="#222"/><path d="M0 2h14" stroke="#222" stroke-width="2"/></svg></button>
        <button aria-label="Zamknij"><svg viewBox="0 0 14 14"><path d="M2 2l10 10M12 2L2 12" stroke="#111" stroke-width="1.300"/></svg></button>
      </div>
    </header>

    <div class="toolbar">
      <i class="grip first"></i>
      <button aria-label="Start"><svg><use href="#app"/></svg></button>
      <button aria-label="Nowy"><svg><use href="#new"/></svg></button>
      <button aria-label="Otwórz"><svg><use href="#open"/></svg></button>
      <button aria-label="Importuj"><svg><use href="#fetch"/></svg></button>
      <button aria-label="Eksportuj"><svg><use href="#send"/></svg></button>
      <i class="sep"></i>
      <button class="boxed" aria-label="Zapisz"><svg><use href="#save"/></svg></button>
      <button aria-label="Zapisz wszystko"><svg><use href="#saveall"/></svg></button>
      <i class="sep"></i>
      <button aria-label="Drukuj"><svg><use href="#print"/></svg></button>
      <i class="sep"></i>
      <button aria-label="Cofnij"><svg><use href="#undo"/></svg></button>
      <button class="caret" aria-label="Lista cofania"><svg viewBox="0 0 6 4"><path d="M0 0h6L3 4z" fill="#999"/></svg></button>
      <button aria-label="Przebuduj"><svg><use href="#light"/></svg></button>
      <i class="sep"></i>
      <button aria-label="Wybierz"><svg><use href="#select"/></svg></button>
      <button aria-label="Zmierz"><svg><use href="#tape"/></svg></button>
      <i class="grip"></i>
      <button aria-label="Prostopadle do"><svg><use href="#normal"/></svg></button>
      <i class="sep wide"></i>
      <button aria-label="Przód"><svg><use href="#c-front"/></svg></button>
      <button aria-label="Tył"><svg><use href="#c-back"/></svg></button>
      <button aria-label="Lewo"><svg><use href="#c-left"/></svg></button>
      <button aria-label="Prawo"><svg><use href="#c-right"/></svg></button>
      <button class="boxed" aria-label="Góra"><svg><use href="#c-top"/></svg></button>
      <button aria-label="Dół"><svg><use href="#c-bottom"/></svg></button>
      <button aria-label="Izometryczny"><svg><use href="#c-iso"/></svg></button>
      <button aria-label="Trimetryczny"><svg><use href="#c-tri"/></svg></button>
      <button aria-label="Dimetryczny"><svg><use href="#c-di"/></svg></button>
      <i class="sep wide"></i>
      <button aria-label="Rura"><svg><use href="#roll"/></svg></button>
      <i class="grip"></i>
      <button aria-label="Adnotacja"><svg><use href="#note"/></svg></button>
      <i class="sep"></i>
      <button disabled aria-label="Nowy styl"><svg><use href="#a1"/></svg></button>
      <button disabled aria-label="Edytuj styl"><svg><use href="#a2"/></svg></button>
      <button disabled aria-label="Dodaj styl"><svg><use href="#a3"/></svg></button>
      <button disabled aria-label="Dołącz styl"><svg><use href="#a4"/></svg></button>
      <button disabled aria-label="Zapisz styl"><svg><use href="#a5"/></svg></button>
      <button disabled aria-label="Ustawienia stylu"><svg><use href="#a6"/></svg></button>
      <i class="grip"></i>
      <button aria-label="Wstaw rurę"><svg><use href="#rollb"/></svg></button>
      <i class="sep wide"></i>
      <button aria-label="Pokaż wszystko"><svg><use href="#z1"/></svg></button>
      <button aria-label="Powiększ obszar"><svg><use href="#z2"/></svg></button>
      <button aria-label="Powiększ"><svg><use href="#z3"/></svg></button>
      <button class="more" aria-label="Więcej"><svg><use href="#chev"/></svg></button>
    </div>

    <main class="work">
      <div class="bars">
        <div class="bar">
          <button aria-label="Wyciągnięcie"><svg><use href="#f1"/></svg></button><button aria-label="Wycięcie"><svg><use href="#f2"/></svg></button><button aria-label="Obrót"><svg><use href="#f3"/></svg></button><button aria-label="Usuń"><svg><use href="#f4"/></svg></button>
          <hr>
          <button aria-label="Zaokrąglenie"><svg><use href="#f5"/></svg></button><button aria-label="Sfazowanie"><svg><use href="#f6"/></svg></button>
          <hr>
          <button aria-label="Przenieś"><svg><use href="#f7"/></svg></button><button aria-label="Szyk liniowy"><svg><use href="#f8"/></svg></button><button aria-label="Szyk kołowy"><svg><use href="#f9"/></svg></button><button aria-label="Lustro"><svg><use href="#f10"/></svg></button>
          <hr>
          <button aria-label="Płaszczyzna"><svg><use href="#f11"/></svg></button><button aria-label="Oś"><svg><use href="#axis"/></svg></button><button aria-label="Punkt"><svg><use href="#dot"/></svg></button>
        </div>
        <div class="bar">
          <button aria-label="Nowa rura"><svg><use href="#t1"/></svg></button><button aria-label="Zatwierdź rurę"><svg><use href="#t2"/></svg></button><button aria-label="Kolano"><svg><use href="#t3"/></svg></button><button aria-label="Gięcie"><svg><use href="#t4"/></svg></button>
          <hr>
          <button aria-label="Obejma"><svg><use href="#t5"/></svg></button><button aria-label="Przebicie"><svg><use href="#t6"/></svg></button><button aria-label="Połączenie"><svg><use href="#t7"/></svg></button><button aria-label="Przejście"><svg><use href="#t8"/></svg></button><button aria-label="Ukos"><svg><use href="#t9"/></svg></button><button aria-label="Narożnik"><svg><use href="#t10"/></svg></button>
          <hr>
          <button aria-label="Oznaczenie TC"><svg><use href="#t11"/></svg></button><button aria-label="Edytuj rurę"><svg><use href="#t12"/></svg></button><button aria-label="Przytnij rurę"><svg><use href="#t13"/></svg></button><button aria-label="Edytuj narożnik"><svg><use href="#t14"/></svg></button><button aria-label="Kontur"><svg><use href="#t15"/></svg></button><button aria-label="Zaczep"><svg><use href="#t16"/></svg></button><button aria-label="Zamek"><svg><use href="#t17"/></svg></button>
          <hr>
          <button aria-label="Maszyna"><svg><use href="#t18"/></svg></button><button aria-label="Części"><svg><use href="#t19"/></svg></button><button aria-label="Przesyłanie"><svg><use href="#t20"/></svg></button>
        </div>
        <div class="bar">
          <button aria-label="Krzywa"><svg><use href="#s1"/></svg></button><button aria-label="Cięcie"><svg><use href="#s2"/></svg></button><button aria-label="Cięcie podwójne"><svg><use href="#s3"/></svg></button><button disabled aria-label="Cięcie skosu"><svg><use href="#s4"/></svg></button><button aria-label="Punkty cięcia"><svg><use href="#s5"/></svg></button><button aria-label="Kierunek"><svg><use href="#s6"/></svg></button><button disabled aria-label="Szybkie cięcie"><svg><use href="#s7"/></svg></button><button aria-label="Obszar"><svg><use href="#s8"/></svg></button>
          <hr>
          <button aria-label="Punkt startu"><svg><use href="#s9"/></svg></button><button aria-label="Podpora"><svg><use href="#s10"/></svg></button><button aria-label="Cylinder"><svg><use href="#s11"/></svg></button><button aria-label="Profil"><svg><use href="#s12"/></svg></button><button aria-label="Rozwinięcie"><svg><use href="#s13"/></svg></button>
          <hr>
          <button aria-label="Pomoc"><svg><use href="#s14"/></svg></button>
        </div>
        <div class="bar">
          <button aria-label="Cięcie A"><svg><use href="#s2"/></svg></button><button aria-label="Cięcie B"><svg><use href="#s3"/></svg></button><button disabled aria-label="Cięcie C"><svg><use href="#s4"/></svg></button><button aria-label="Punkty"><svg><use href="#s5"/></svg></button><button aria-label="Kierunek cięcia"><svg><use href="#s6"/></svg></button><button disabled aria-label="Automat"><svg><use href="#s7"/></svg></button>
          <hr>
          <div class="long eleven">
            <button aria-label="Szkic"><svg><use href="#k1"/></svg></button><button aria-label="Szkic 3D"><svg><use href="#k2"/></svg></button><button aria-label="Wymiar"><svg><use href="#k3"/></svg></button><button aria-label="Linia"><svg><use href="#line"/></svg></button><button aria-label="Splajn"><svg><use href="#spline"/></svg></button><button aria-label="Splajn na powierzchni"><svg><use href="#surf"/></svg></button><button aria-label="Linia środkowa"><svg><use href="#cline"/></svg></button><button disabled aria-label="Konwertuj"><svg><use href="#g-conv"/></svg></button><button aria-label="Punkt szkicu"><svg><use href="#pt"/></svg></button><button disabled aria-label="Przytnij"><svg><use href="#g-trim"/></svg></button><button disabled aria-label="Wydłuż"><svg><use href="#g-t"/></svg></button>
          </div>
          <hr>
          <button disabled aria-label="Prostopadłość"><svg><use href="#g-perp"/></svg></button><button disabled aria-label="Relacje"><svg><use href="#g-vis"/></svg></button><button disabled aria-label="Odbicie"><svg><use href="#g-mir"/></svg></button><button disabled aria-label="Bryła"><svg><use href="#g-cube"/></svg></button>
        </div>
      </div>

      <aside class="panel">
        <div class="splitter"><i></i></div>
        <div class="tabs">
          <button aria-label="Drzewo operacji"><svg><use href="#part"/></svg></button>
          <button class="off" aria-label="Właściwości"><svg><use href="#props"/></svg></button>
        </div>
        <label class="filter"><svg><use href="#funnel"/></svg><input type="text" aria-label="Filtr"></label>
        <ul class="tree">
          <li class="root"><svg><use href="#part"/></svg>Profil_H_szkic_70x56skos (Domyślna) &lt;&lt;</li>
          <li class="sub"><svg><use href="#r-body"/></svg>Obiekty bryłowe(1)</li>
          <li><svg><use href="#r-plane"/></svg>Płaszczyzna przednia</li>
          <li><svg><use href="#r-plane"/></svg>Płaszczyzna górna</li>
          <li><svg><use href="#r-plane"/></svg>Płaszczyzna prawa</li>
          <li><svg><use href="#r-orig"/></svg>Początek układu współrzędnych</li>
          <li><svg><use href="#r-imp"/></svg>Import1</li>
          <li><svg><use href="#r-tube"/></svg>Import1_Rura1</li>
          <li class="sub"><svg><use href="#r-cut"/></svg>Wytnij-wyciągnięcie1</li>
          <li class="sub"><svg><use href="#r-cut"/></svg>Wytnij-wyciągnięcie2</li>
          <li class="sub"><svg><use href="#r-cut"/></svg>Wytnij-wyciągnięcie3</li>
        </ul>
        <div class="hscroll">
          <button aria-label="W lewo"><svg viewBox="0 0 6 8"><path d="M4.500 1.500L2 4l2.500 2.500" fill="none" stroke="#222" stroke-width="1.300"/></svg></button>
          <div class="track"><i></i></div>
          <button aria-label="W prawo"><svg viewBox="0 0 6 8"><path d="M1.500 1.500L4 4 1.500 6.500" fill="none" stroke="#222" stroke-width="1.300"/></svg></button>
        </div>
      </aside>

      <section class="view">
        <svg class="model" viewBox="0 0 664 567" preserveAspectRatio="xMinYMin" aria-label="Model 3D">
          <g class="beam" transform="translate(-1 118) scale(.4209 .3333)">
            <path d="M1485 570L1390 727 1502 758 1519 738 1505 560z" fill="#656173"/>
            <path d="M324 39L1498 376 1482 398 308 62z" fill="#706c80"/>
            <path d="M308 62L1482 398 1489 545 272 197z" fill="#656173"/>
            <path d="M272 197L1489 545 1485 566 1330 760 700 590 210 285 267 215z" fill="#757186"/>
            <path d="M267 215L1485 566" fill="none"/>
            <path d="M748 493C755 425 890 425 900 484L860 520 772 498z" fill="#6b677a"/>
            <path d="M772 498L813 480 813 511z" fill="#757186"/>
            <path d="M1498 376L1519 738 1502 758 1494 606Q1490 598 1476 610L1330 802 1337 965 1319 985 1300 626 1318 604 1326 758Q1330 760 1334 755L1485 566Q1490 560 1489 545L1482 398z" fill="#6b677a"/>
            <path d="M145 267L548 382 530 404 127 289zM550 436L614 455 597 476 536 458zM618 539L732 571 732 598 602 560zM748 493L813 511 813 537 731 513zM830 464L1318 604 1300 626 813 485z" fill="#706c80"/>
            <path d="M548 382L530 404 536 458 550 436zM614 455L597 476 602 560 618 539z" fill="#757186"/>
            <path d="M127 289L530 404 536 458 597 476 602 560 732 598 731 513 813 537 813 485 1300 626 1319 985 40 618z" fill="#656173"/>
            <path class="warm" d="M127 289L40 618 1319 985 1308 760" fill="none"/>
          </g>
          <g class="triad">
            <path d="M23 532V520" stroke="#98e8a0" stroke-width="3"/><ellipse cx="23" cy="521" rx="3" ry="2" fill="#0d6818"/>
            <path d="M23 532l-11-2" stroke="#1818b8" stroke-width="2.500"/><path d="M14 527l-7 2.500 7 3.500z" fill="#1818b8"/>
            <path d="M23 532l-5 5" stroke="#a01820" stroke-width="2.500"/><circle cx="17.500" cy="539" r="2.500" fill="#b01018"/>
            <text x="21" y="514" fill="#488060">Y</text><text x="3" y="529" fill="#3838b8">Z</text><text x="12" y="542" fill="#d02838">X</text>
          </g>
        </svg>
        <div class="docctl">
          <button aria-label="Poprzedni"><svg viewBox="0 0 14 14"><path d="M1.500 1.500h11v11h-11zM9 4L5 7l4 3" fill="none" stroke="#8a8a94"/></svg></button>
          <button aria-label="Następny"><svg viewBox="0 0 14 14"><path d="M1.500 1.500h11v11h-11zM5 4l4 3-4 3" fill="none" stroke="#8a8a94"/></svg></button>
          <button aria-label="Minimalizuj dokument"><svg viewBox="0 0 14 14"><path d="M2 12.500h10" stroke="#777" stroke-width="1.400"/></svg></button>
          <button aria-label="Przywróć dokument"><svg viewBox="0 0 14 14"><path d="M.5 5.500h9v7h-9zM4.500 5V1.500h9v7H10" fill="none" stroke="#8a8a94"/></svg></button>
          <button aria-label="Zamknij dokument"><svg viewBox="0 0 14 14"><path d="M2 2l10 10M12 2L2 12" stroke="#777" stroke-width="1.300"/></svg></button>
        </div>
        <button class="collapse" aria-label="Zwiń panel"></button>
      </section>

      <div class="bar right">
        <button aria-label="Szkic"><svg><use href="#k1"/></svg></button><button aria-label="Szkic 3D"><svg><use href="#k2"/></svg></button><button aria-label="Wymiar"><svg><use href="#k3"/></svg></button>
        <hr>
        <div class="long nineteen">
          <button aria-label="Linia"><svg><use href="#line"/></svg></button><button aria-label="Prostokąt"><svg><use href="#rect"/></svg></button><button aria-label="Równoległobok"><svg><use href="#para"/></svg></button><button aria-label="Wielobok"><svg><use href="#hex"/></svg></button><button aria-label="Okrąg"><svg><use href="#circ"/></svg></button><button aria-label="Łuk"><svg><use href="#arc"/></svg></button><button aria-label="Łuk styczny"><svg><use href="#tarc"/></svg></button><button aria-label="Łuk 3-punktowy"><svg><use href="#arc3"/></svg></button><button aria-label="Rowek"><svg><use href="#slot"/></svg></button><button aria-label="Splajn"><svg><use href="#spline"/></svg></button><button aria-label="Splajn na powierzchni"><svg><use href="#surf"/></svg></button><button aria-label="Linia środkowa"><svg><use href="#cline"/></svg></button><button disabled aria-label="Konwertuj"><svg><use href="#g-conv"/></svg></button><button aria-label="Punkt"><svg><use href="#pt"/></svg></button><button disabled aria-label="Zaokrąglenie szkicu"><svg><use href="#g-fil"/></svg></button><button disabled aria-label="Odsunięcie"><svg><use href="#g-off"/></svg></button><button disabled aria-label="Przytnij"><svg><use href="#g-trim"/></svg></button><button disabled aria-label="Wydłuż"><svg><use href="#g-t"/></svg></button><button aria-label="Tekst"><svg><use href="#txt"/></svg></button>
        </div>
        <button class="more" aria-label="Więcej"><svg><use href="#chev"/></svg></button>
      </div>
    </main>

    <footer class="status">
      <span class="app">Tube Design</span>
      <span class="mode">Edycja Część</span>
      <span class="unit">mm</span>
      <svg class="up" viewBox="0 0 4 3"><path d="M0 3h4L2 0z" fill="#222"/></svg>
      <svg class="tag" viewBox="0 0 12 10"><path d="M1 3l3-2 7 1v5L8 9 1 6z" fill="#ddd" stroke="#333"/><path d="M3 4l5 3M5 3l4 2" stroke="#333"/></svg>
      <svg class="size" viewBox="0 0 6 6"><path d="M5 1v1M5 3v1M3 3v1M5 5v1M3 5v1M1 5v1" stroke="#aaa"/></svg>
    </footer>
  </div>
  <svg class="cursor" viewBox="0 0 24 24" aria-hidden="true"><circle cx="12" cy="12" r="10" fill="#f0ee30" opacity=".45"/><path d="M9 12v11l2.500-2.500L13 24l2-1-1.500-3H17z" fill="#fff" stroke="#222" stroke-width=".8"/></svg>
</div>
</body>
</html>
```
FILE: styles.css
```css
* { box-sizing: border-box; }
body { margin: 0; background: #000; font: 7px/10px "Open Sans", "Noto Sans", sans-serif; color: #111; overflow: hidden; }
button { border: 0; padding: 0; margin: 0; background: none; font: inherit; color: inherit; display: flex; align-items: center; justify-content: center; flex: none; }
button:disabled { color: #c8c8cc; }
ul { list-style: none; margin: 0; padding: 0; }
svg { display: block; flex: none; }
.defs { position: absolute; width: 0; height: 0; }

.desktop { position: relative; height: 100vh; margin: 0 136px; overflow: hidden; display: flex; flex-direction: column; justify-content: flex-end; }
.wallpaper { position: absolute; left: 198px; right: 0; top: 58px; bottom: 0; width: calc(100% - 198px); height: calc(100% - 58px); }
.shortcuts { position: relative; display: grid; grid-template-columns: repeat(6, 69px); grid-auto-rows: 54px; margin: 0 0 -26px -1px; }
.shortcuts a { display: flex; flex-direction: column; align-items: center; gap: 1px; color: #fff; text-decoration: none; text-align: center; text-shadow: 1px 1px 1px #000, 0 0 2px #000; }
.shortcuts svg { width: 20px; height: 20px; }

.window { position: absolute; left: 0; right: 50px; top: 0; bottom: 78px; display: flex; flex-direction: column; background: #fbf9fd; border-right: 1px solid #5a7480; border-bottom: 1px solid #5a7480; box-shadow: 1px 2px 7px rgba(0, 20, 40, .6); }
.strip { height: 4px; flex: none; border-bottom: 1px solid #cfcdd3; }
.titlebar { height: 29px; flex: none; display: flex; align-items: center; border-bottom: 1px solid #d3d1d7; }
.brand { display: flex; align-items: center; gap: 4px; width: 100px; padding-left: 5px; font-size: 9px; font-weight: 600; color: #333; white-space: nowrap; }
.brand b { font-weight: 700; color: #111; }
.brand svg { width: 16px; height: 16px; overflow: visible; }
.logo-text { font: 700 4px "Liberation Sans", sans-serif; fill: #111; }
.menu { display: flex; align-items: center; gap: 10px; align-self: stretch; border-right: 1px solid #d3d1d7; padding-right: 3px; }
.pin svg { width: 10px; height: 10px; }
.titlebar h1 { flex: 1; margin: 0; font: 400 7px/10px Lato, "Open Sans", sans-serif; text-align: center; padding-right: 68px; white-space: nowrap; }
.winctl { display: flex; gap: 16px; padding-right: 6px; }
.winctl svg { width: 14px; height: 14px; }

.toolbar { height: 29px; flex: none; display: flex; align-items: center; padding-bottom: 2px; border-bottom: 1px solid #c4c2ca; }
.toolbar button { width: 24px; height: 25px; }
.toolbar svg { width: 20px; height: 20px; }
.toolbar .boxed { border: 1px solid #c6c4ca; }
.toolbar .caret { width: 11px; }
.toolbar .caret svg { width: 6px; height: 4px; }
.toolbar .more { margin-left: auto; width: 18px; }
.more svg, .toolbar .more svg { width: 10px; height: 10px; }
.sep { width: 1px; height: 22px; margin: 0 2px; background: #a9a7ad; }
.sep.wide { margin: 0 3px; }
.grip { width: 5px; height: 24px; margin: 0 3px 0 6px; border-left: 1px solid #99979e; border-right: 1px dotted #77757c; }
.grip.first { margin: 0 4px 0 0; border-left: 0; width: 4px; }

.work { flex: 1; min-height: 0; display: flex; }
.bars { display: flex; align-items: flex-start; width: 113px; flex: none; }
.bar { width: 29px; flex: none; display: flex; flex-direction: column; padding: 7px 0 4px; border-right: 1px solid #b5b3ba; border-bottom: 1px solid #a9a7ae; background: linear-gradient(90deg, #99979e 50%, transparent 50%) 2px 1px / 2px 1px repeat-x; }
.bar + .bar { border-left: 1px solid #b5b3ba; margin-left: -1px; width: 30px; }
.bar:last-child { width: 27px; border-right: 0; }
.bar button { height: 24px; }
.bar svg { width: 18px; height: 18px; }
.bar hr { width: 24px; height: 1px; margin: 1px auto; border: 0; background: #aeacb2; }
.long { display: flex; flex-direction: column; }
.long button { flex: 1; }
.eleven { height: 261px; }
.nineteen { height: 451px; }
.work .right { width: 28px; border: 0; padding-left: 2px; }
.right .more { margin-top: auto; height: 12px; }
.right .more svg { width: 10px; height: 10px; }
.t3d { font: 700 10px "Open Sans", sans-serif; fill: #111; }

.panel { width: 152px; flex: none; display: flex; flex-direction: column; border-left: 1px solid #cccad0; border-right: 1px solid #a19fab; overflow: hidden; }
.splitter { height: 12px; border-top: 2px solid #d5d3da; border-bottom: 1px solid #d5d3da; display: flex; align-items: center; justify-content: center; }
.splitter i { width: 3px; height: 3px; border: 1px solid #999; border-radius: 50%; }
.tabs { display: flex; margin-top: 2px; border-bottom: 1px solid #bbb9c0; }
.tabs button { width: 33px; height: 23px; }
.tabs .off { background: #cdccd2; border: 1px solid #aeacb4; border-bottom: 0; }
.tabs svg { width: 18px; height: 18px; }
.filter { display: flex; align-items: center; height: 15px; margin: 1px 2px 0; border: 1px solid #c5d2dc; padding-left: 1px; }
.filter svg { width: 12px; height: 12px; }
.filter input { flex: 1; min-width: 0; height: 10px; border: 0; background: none; font: inherit; }
.tree { display: grid; grid-auto-rows: 1fr; height: 153px; flex: none; border-bottom: 2px solid #3f8fb4; white-space: nowrap; }
.tree li { display: flex; align-items: center; gap: 3px; padding-left: 15px; position: relative; }
.tree .root { padding-left: 1px; }
.tree svg { width: 12px; height: 12px; }
.tree .sub::before { content: ""; position: absolute; left: 6px; top: 4px; border: 2px solid transparent; border-left: 3px solid #444; border-right-width: 0; }
.hscroll { display: flex; align-items: center; height: 11px; margin-top: auto; margin-bottom: 1px; }
.hscroll button { width: 10px; }
.hscroll svg { width: 6px; height: 8px; }
.track { flex: 1; height: 9px; background: #f2f0f4; }
.track i { display: block; width: 57%; height: 100%; background: #cccacd; }

.view { flex: 1; min-width: 0; position: relative; background: #c6c7d3; overflow: hidden; }
.model { width: 100%; height: 100%; }
.beam path { stroke: #14121c; stroke-width: 1px; stroke-linejoin: round; vector-effect: non-scaling-stroke; }
.beam .warm { stroke: #5c4038; }
.triad text { font: 6px "Liberation Sans", sans-serif; }
.docctl { position: absolute; top: 5px; right: 9px; display: flex; gap: 10px; }
.docctl svg { width: 14px; height: 14px; }
.collapse { position: absolute; left: 0; top: 272px; width: 5px; height: 24px; background: #f4f3f8; border: 1px solid #aaa; border-left: 0; }
.collapse::after { content: ""; width: 3px; height: 3px; border: 1px solid #888; border-radius: 50%; }

.status { height: 12px; flex: none; display: flex; align-items: center; border-top: 1px solid #b7b5bd; padding: 0 1px; }
.mode { margin-left: auto; width: 132px; }
.unit { width: 41px; }
.up { width: 4px; height: 3px; margin-right: 16px; }
.tag { width: 12px; height: 10px; margin-right: 5px; }
.size { width: 6px; height: 6px; }
.cursor { position: absolute; left: 136px; top: 40px; width: 24px; height: 24px; }
```
